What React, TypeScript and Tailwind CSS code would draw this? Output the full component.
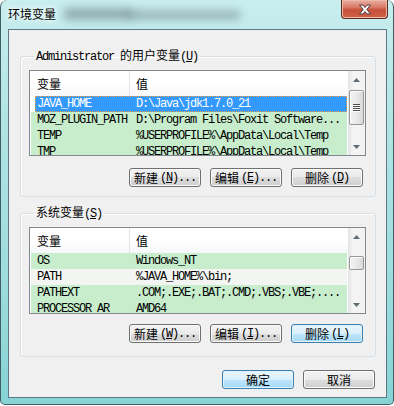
const MONO = "font-['Liberation_Mono','Noto_Sans_CJK_SC',monospace] tracking-[-1.2px]";
const CJK = "font-['Noto_Sans_CJK_SC','Liberation_Sans',sans-serif]";

type Row = { name: string; value: string; bg: string; selected?: boolean };

const userRows: Row[] = [
  { name: "JAVA_HOME", value: "D:\\Java\\jdk1.7.0_21", bg: "", selected: true },
  { name: "MOZ_PLUGIN_PATH", value: "D:\\Program Files\\Foxit Software...", bg: "bg-[#c7edcc]" },
  { name: "TEMP", value: "%USERPROFILE%\\AppData\\Local\\Temp", bg: "bg-[#c7edcc]" },
  { name: "TMP", value: "%USERPROFILE%\\AppData\\Local\\Temp", bg: "bg-[#c7edcc]" },
];

const systemRows: Row[] = [
  { name: "OS", value: "Windows_NT", bg: "bg-[#c7edcc]" },
  { name: "PATH", value: "%JAVA_HOME%\\bin;", bg: "bg-[#f3f5f3]" },
  { name: "PATHEXT", value: ".COM;.EXE;.BAT;.CMD;.VBS;.VBE;....", bg: "bg-[#c7edcc]" },
  { name: "PROCESSOR_AR", value: "AMD64", bg: "bg-[#c7edcc]" },
];

function Arrow({ down }: { down?: boolean }) {
  return (
    <div className="flex h-[17px] items-center justify-center">
      <svg width="7" height="4" viewBox="0 0 7 4">
        <path d={down ? "M0 0H7L3.5 4Z" : "M0 4H7L3.5 0Z"} fill="#5f6c72" />
      </svg>
    </div>
  );
}

function ScrollBar({ thumbTop, thumbH, grip }: { thumbTop: number; thumbH: number; grip?: boolean }) {
  return (
    <div className="flex w-[17px] flex-col bg-[linear-gradient(90deg,#e3e3e3,#f5f5f5_30%,#f1f1f1)]">
      <Arrow />
      <div className="flex-1">
        <div
          className="mx-auto flex w-[15px] flex-col items-center justify-center gap-[1px] rounded-[2px] border border-[#979797] bg-[linear-gradient(90deg,#f4f4f4,#e9e9e9_50%,#d9d9d9)] shadow-[inset_1px_1px_0_#fff]"
          style={{ marginTop: thumbTop, height: thumbH }}
        >
          {grip &&
            [0, 1, 2, 3].map((i) => (
              <div key={i} className="h-[1px] w-[7px] bg-[#4a4a4a] shadow-[0_1px_0_#fff]" />
            ))}
        </div>
      </div>
      <Arrow down />
    </div>
  );
}

function VarList({ rows, h, thumbTop, thumbH, grip }: { rows: Row[]; h: string; thumbTop: number; thumbH: number; grip?: boolean }) {
  return (
    <div className={`flex w-[337px] border border-[#828790] bg-white ${h}`}>
      <div className="min-w-0 flex-1 overflow-hidden">
        <div className="flex h-[25px] items-center bg-[linear-gradient(#ffffff,#ffffff_50%,#f6f7f9)] text-[12px] leading-[12px]">
          <div className={`flex h-full w-[100px] items-center border-r border-[#e3e5e8] pl-[7px] ${CJK}`}>变量</div>
          <div className={`pl-[6px] ${CJK}`}>值</div>
        </div>
        <div className="mx-[1px]">
          {rows.map((r) =>
            r.selected ? (
              <div
                key={r.name}
                className={`ml-[4px] flex h-[16px] items-center whitespace-nowrap border border-dotted border-[#e0a050] bg-[#3399ff] pl-[1px] text-[12px] leading-[14px] text-white ${MONO}`}
              >
                <span className="w-[99px] shrink-0">{r.name}</span>
                <span>{r.value}</span>
              </div>
            ) : (
              <div
                key={r.name}
                className={`flex h-[16px] items-center whitespace-nowrap pl-[6px] text-[12px] leading-[16px] text-black ${MONO} ${r.bg}`}
              >
                <span className="w-[99px] shrink-0">{r.name}</span>
                <span>{r.value}</span>
              </div>
            )
          )}
        </div>
      </div>
      <ScrollBar thumbTop={thumbTop} thumbH={thumbH} grip={grip} />
    </div>
  );
}

function Btn({ cn, key2, dots, blue, w = "w-[72px]" }: { cn: string; key2?: string; dots?: boolean; blue?: boolean; w?: string }) {
  const look = blue
    ? "border-[#3c7fb1] bg-[linear-gradient(#eaf6fd_0%,#d9f0fc_50%,#bee6fd_50%,#a7d9f5_100%)] shadow-[inset_0_0_0_1px_#dff2fc]"
    : "border-[#707070] bg-[linear-gradient(#f2f2f2_0%,#ebebeb_50%,#dddddd_50%,#cfcfcf_100%)] shadow-[inset_0_0_0_1px_#fbfbfb]";
  return (
    <button
      type="button"
      className={`flex h-[19px] ${w} items-center justify-center rounded-[3px] border text-[12px] leading-[12px] text-black ${look}`}
    >
      <span className={CJK}>{cn}</span>
      {key2 && (
        <span className={`ml-[2px] ${MONO}`}>
          (<u className="underline-offset-[1px]">{key2}</u>){dots ? "..." : ""}
        </span>
      )}
    </button>
  );
}

function Group({ legend, children, mt }: { legend: React.ReactNode; children: React.ReactNode; mt?: string }) {
  return (
    <fieldset className={`w-[356px] rounded-[3px] border border-[#d5dfe5] pl-[8px] shadow-[inset_1px_1px_0_#fff] ${mt ?? ""}`}>
      <legend className="ml-[5px] px-[2px] text-[12px] leading-[12px] text-black">{legend}</legend>
      {children}
    </fieldset>
  );
}

export default function App() {
  return (
    <div className="h-[406px] w-[394px] bg-white">
      <div className="relative flex h-[405px] w-[394px] flex-col overflow-hidden rounded-t-[7px] rounded-b-[5px] border-x border-b border-[#3f5e63] bg-[linear-gradient(180deg,#c9eeee_0%,#b2e4e5_30%,#9ddcdd_70%,#86d3d5_100%)]">
        <div className="relative flex h-[29px] shrink-0 items-center pl-[7px]">
          <div className="absolute left-[62px] top-[8px] h-[12px] w-[70px] rounded-full bg-[#6f8488] opacity-60 blur-[4px]" />
          <div className="absolute left-[125px] top-[10px] h-[10px] w-[115px] rounded-full bg-[#6f8488] opacity-50 blur-[4px]" />
          <span className={`relative -mt-[2px] text-[12px] leading-[14px] text-black [text-shadow:0_0_6px_#fff,0_0_4px_#fff] ${CJK}`}>
            环境变量
          </span>
          <div className="absolute right-[5px] top-0 flex h-[19px] w-[47px] items-center justify-center rounded-b-[4px] border border-t-0 border-[#5c2b22] bg-[linear-gradient(#eab1a2_0%,#d87a66_40%,#c7503a_55%,#cf6146_100%)] shadow-[inset_0_0_0_1px_#f0b8a8]">
            <svg width="14" height="11" viewBox="0 0 14 11">
              <path
                d="M1.5 1H5L7 3.5L9 1H12.5L8.8 5.5L12.5 10H9L7 7.5L5 10H1.5L5.2 5.5Z"
                fill="#ffffff"
                stroke="#4b3a3a"
                strokeWidth="1"
                strokeLinejoin="round"
              />
            </svg>
          </div>
        </div>

        <div className="mb-[6px] ml-[7px] mr-[6px] flex flex-1 flex-col border border-[#5f7888] bg-[#f0f0f0] pl-[11px] pt-[19px]">
          <Group
            legend={
              <>
                <span className={MONO}>Administrator </span>
                <span className={CJK}>的用户变量</span>
                <span className={MONO}>
                  (<u className="underline-offset-[1px]">U</u>)
                </span>
              </>
            }
          >
            <div className="mt-[7px]">
              <VarList rows={userRows} h="h-[86px]" thumbTop={2} thumbH={35} grip />
            </div>
            <div className="ml-[100px] mt-[12px] flex gap-[9px] pb-[9px]">
              <Btn cn="新建" key2="N" dots />
              <Btn cn="编辑" key2="E" dots />
              <Btn cn="删除" key2="D" />
            </div>
          </Group>

          <Group
            mt="mt-[9px]"
            legend={
              <>
                <span className={CJK}>系统变量</span>
                <span className={MONO}>
                  (<u className="underline-offset-[1px]">S</u>)
                </span>
              </>
            }
          >
            <div className="mt-[7px]">
              <VarList rows={systemRows} h="h-[87px]" thumbTop={11} thumbH={14} />
            </div>
            <div className="ml-[100px] mt-[10px] flex gap-[9px] pb-[13px]">
              <Btn cn="新建" key2="W" dots />
              <Btn cn="编辑" key2="I" dots />
              <Btn cn="删除" key2="L" blue />
            </div>
          </Group>

          <div className="ml-[202px] mt-[13px] flex gap-[9px]">
            <Btn cn="确定" blue />
            <Btn cn="取消" />
          </div>
        </div>
      </div>
    </div>
  );
}
